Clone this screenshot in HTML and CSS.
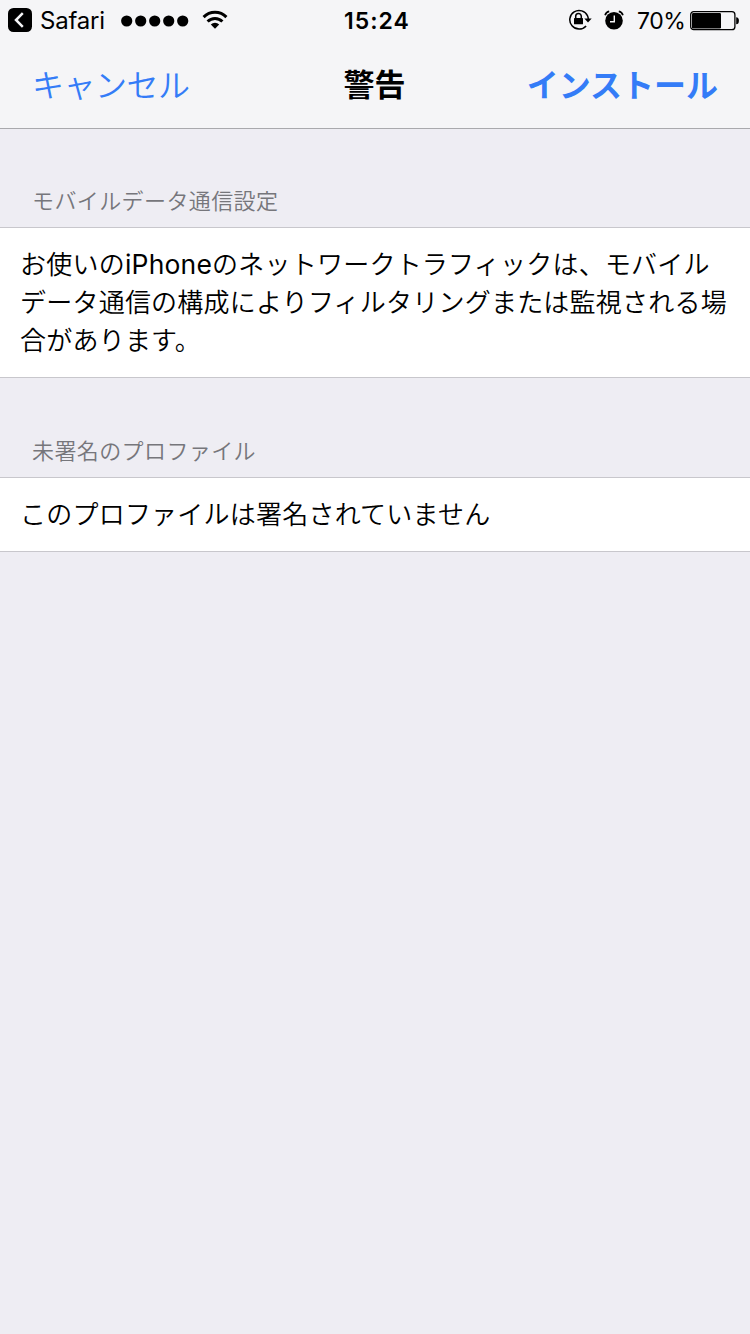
FILE: index.html
```html
<!DOCTYPE html>
<html lang="ja">
<head>
<meta charset="utf-8">
<title>警告</title>
<link rel="stylesheet" href="styles.css">
</head>
<body>
<header class="top">
  <div class="status">
    <div class="status-left">
      <svg class="back" width="24" height="24" viewBox="0 0 24 24"><rect width="24" height="24" rx="5.5"/><path d="M14.8 5.2 8 12l6.8 6.8" fill="none" stroke="#f5f5f7" stroke-width="2.5"/></svg>
      <span class="app">Safari</span>
      <svg class="signal" width="68" height="12" viewBox="0 0 68 12"><circle cx="5.7" cy="6" r="5.6"/><circle cx="19.7" cy="6" r="5.6"/><circle cx="33.7" cy="6" r="5.6"/><circle cx="47.7" cy="6" r="5.6"/><circle cx="61.7" cy="6" r="5.6"/></svg>
      <svg class="wifi" width="26" height="20" viewBox="0 0 26 20"><g fill="none" stroke="#000" stroke-width="3"><path d="M1.6 7.1a16 16 0 0 1 22.8 0"/><path d="M5.6 11.5a10.4 10.4 0 0 1 14.8 0"/></g><path d="M13 18.8 8.8 14.5a6 6 0 0 1 8.4 0Z"/></svg>
    </div>
    <span class="time">15:24</span>
    <div class="status-right">
      <svg class="lock" width="24" height="22" viewBox="0 0 24 22"><path d="M19.6 7A9.3 9.3 0 1 0 18.1 16.9M19.6 7Q20.3 8.6 20.3 10.5" fill="none" stroke="#000" stroke-width="1.5"/><path d="M16.3 9.5h7.4L20 13.6Z"/><rect x="6" y="9" width="9" height="6.3" rx=".6"/><path d="M7.7 9.5V7.3a2.8 2.8 0 0 1 5.6 0v2.2" fill="none" stroke="#000" stroke-width="1.5"/></svg>
      <svg class="alarm" width="20" height="20" viewBox="0 0 20 20"><circle cx="10" cy="10.8" r="8.8"/><path d="M1.1 5.2A5.5 5.5 0 0 1 5.2 1.4M18.9 5.2a5.5 5.5 0 0 0-4.1-3.8" fill="none" stroke="#000" stroke-width="1.7"/><path d="M10.3 5.5v6.2H6" fill="none" stroke="#f5f5f7" stroke-width="1.4"/></svg>
      <span class="percent">70%</span>
      <svg class="battery" width="50" height="20" viewBox="0 0 50 20"><rect x=".7" y=".7" width="44.2" height="18" rx="3" fill="none" stroke="#000" stroke-width="1.3"/><rect x="2" y="2" width="29" height="15.4" rx="1.2"/><path d="M46.2 6.2q2.7 0 2.7 3.5t-2.7 3.5Z"/></svg>
    </div>
  </div>
  <nav class="nav">
    <span class="cancel">キャンセル</span>
    <h1 class="title">警告</h1>
    <span class="install">インストール</span>
  </nav>
</header>
<main>
  <section class="group">
    <h2 class="label">モバイルデータ通信設定</h2>
    <p class="cell">お使いの<span class="latin">iPhone</span>のネットワークトラフィックは、モバイル<br>データ通信の構成によりフィルタリングまたは監視される場<br>合があります。</p>
  </section>
  <section class="group">
    <h2 class="label">未署名のプロファイル</h2>
    <p class="cell cell-single">このプロファイルは署名されていません</p>
  </section>
</main>
</body>
</html>
```
FILE: styles.css
```css
* { box-sizing: border-box; }
body {
  margin: 0;
  min-height: 1334px;
  background: #eeedf3;
  color: #000;
  font-family: Inter, "Noto Sans CJK JP", sans-serif;
}
svg { display: block; flex: none; }
.top {
  height: 129px;
  background: #f5f5f7;
  border-bottom: 1px solid #a9a9ad;
}
.status {
  display: grid;
  grid-template-columns: 1fr auto 1fr;
  align-items: center;
  height: 42px;
  line-height: 42px;
}
.status-left, .status-right { display: flex; align-items: center; height: 42px; }
.status-left { padding-left: 8px; }
.status-right { justify-content: flex-end; padding-right: 10px; }
.back { margin-top: -2px; }
.app { width: 81px; padding-left: 8px; font-size: 24px; letter-spacing: -0.2px; }
.signal { margin: -1px 0 0 8px; }
.wifi { margin: -2px 0 0 13px; }
.time { font-weight: 600; font-size: 23px; letter-spacing: 1px; padding-left: 4px; }
.lock { margin-top: -2px; }
.alarm { margin: -2px 0 0 12px; }
.percent { margin-left: 13px; font-size: 23px; letter-spacing: -0.5px; width: 53px; }
.battery { margin-top: -1px; }
.nav {
  display: grid;
  grid-template-columns: 1fr auto 1fr;
  align-items: center;
  height: 82px;
  padding: 0 32px;
  font-family: "Noto Sans CJK JP", sans-serif;
  font-size: 32px;
  line-height: 82px;
}
.cancel { color: #347cf7; font-weight: 350; letter-spacing: -0.5px; }
.title { margin: 0 1px 0 0; font-size: 31px; font-weight: 700; }
.install { color: #347cf7; font-weight: 700; justify-self: end; }
.label {
  margin: 0;
  height: 98px;
  padding: 44px 32px 0;
  color: #76767b;
  font: 350 22px/52px "Noto Sans CJK JP", sans-serif;
  letter-spacing: 0.4px;
}
.group + .group .label { height: 99px; padding-top: 45px; }
.cell {
  margin: 0;
  height: 151px;
  padding: 16px 0 0 20px;
  border: 1px solid #c8c7cc;
  border-width: 1px 0;
  background: #fff;
  font: 350 26px/38px "Noto Sans CJK JP", sans-serif;
  letter-spacing: 0.22px;
  white-space: nowrap;
}
.cell-single { height: 75px; }
.latin { font-family: Inter, sans-serif; font-weight: 400; font-size: 26.5px; line-height: 1; letter-spacing: 0.2px; }
```
